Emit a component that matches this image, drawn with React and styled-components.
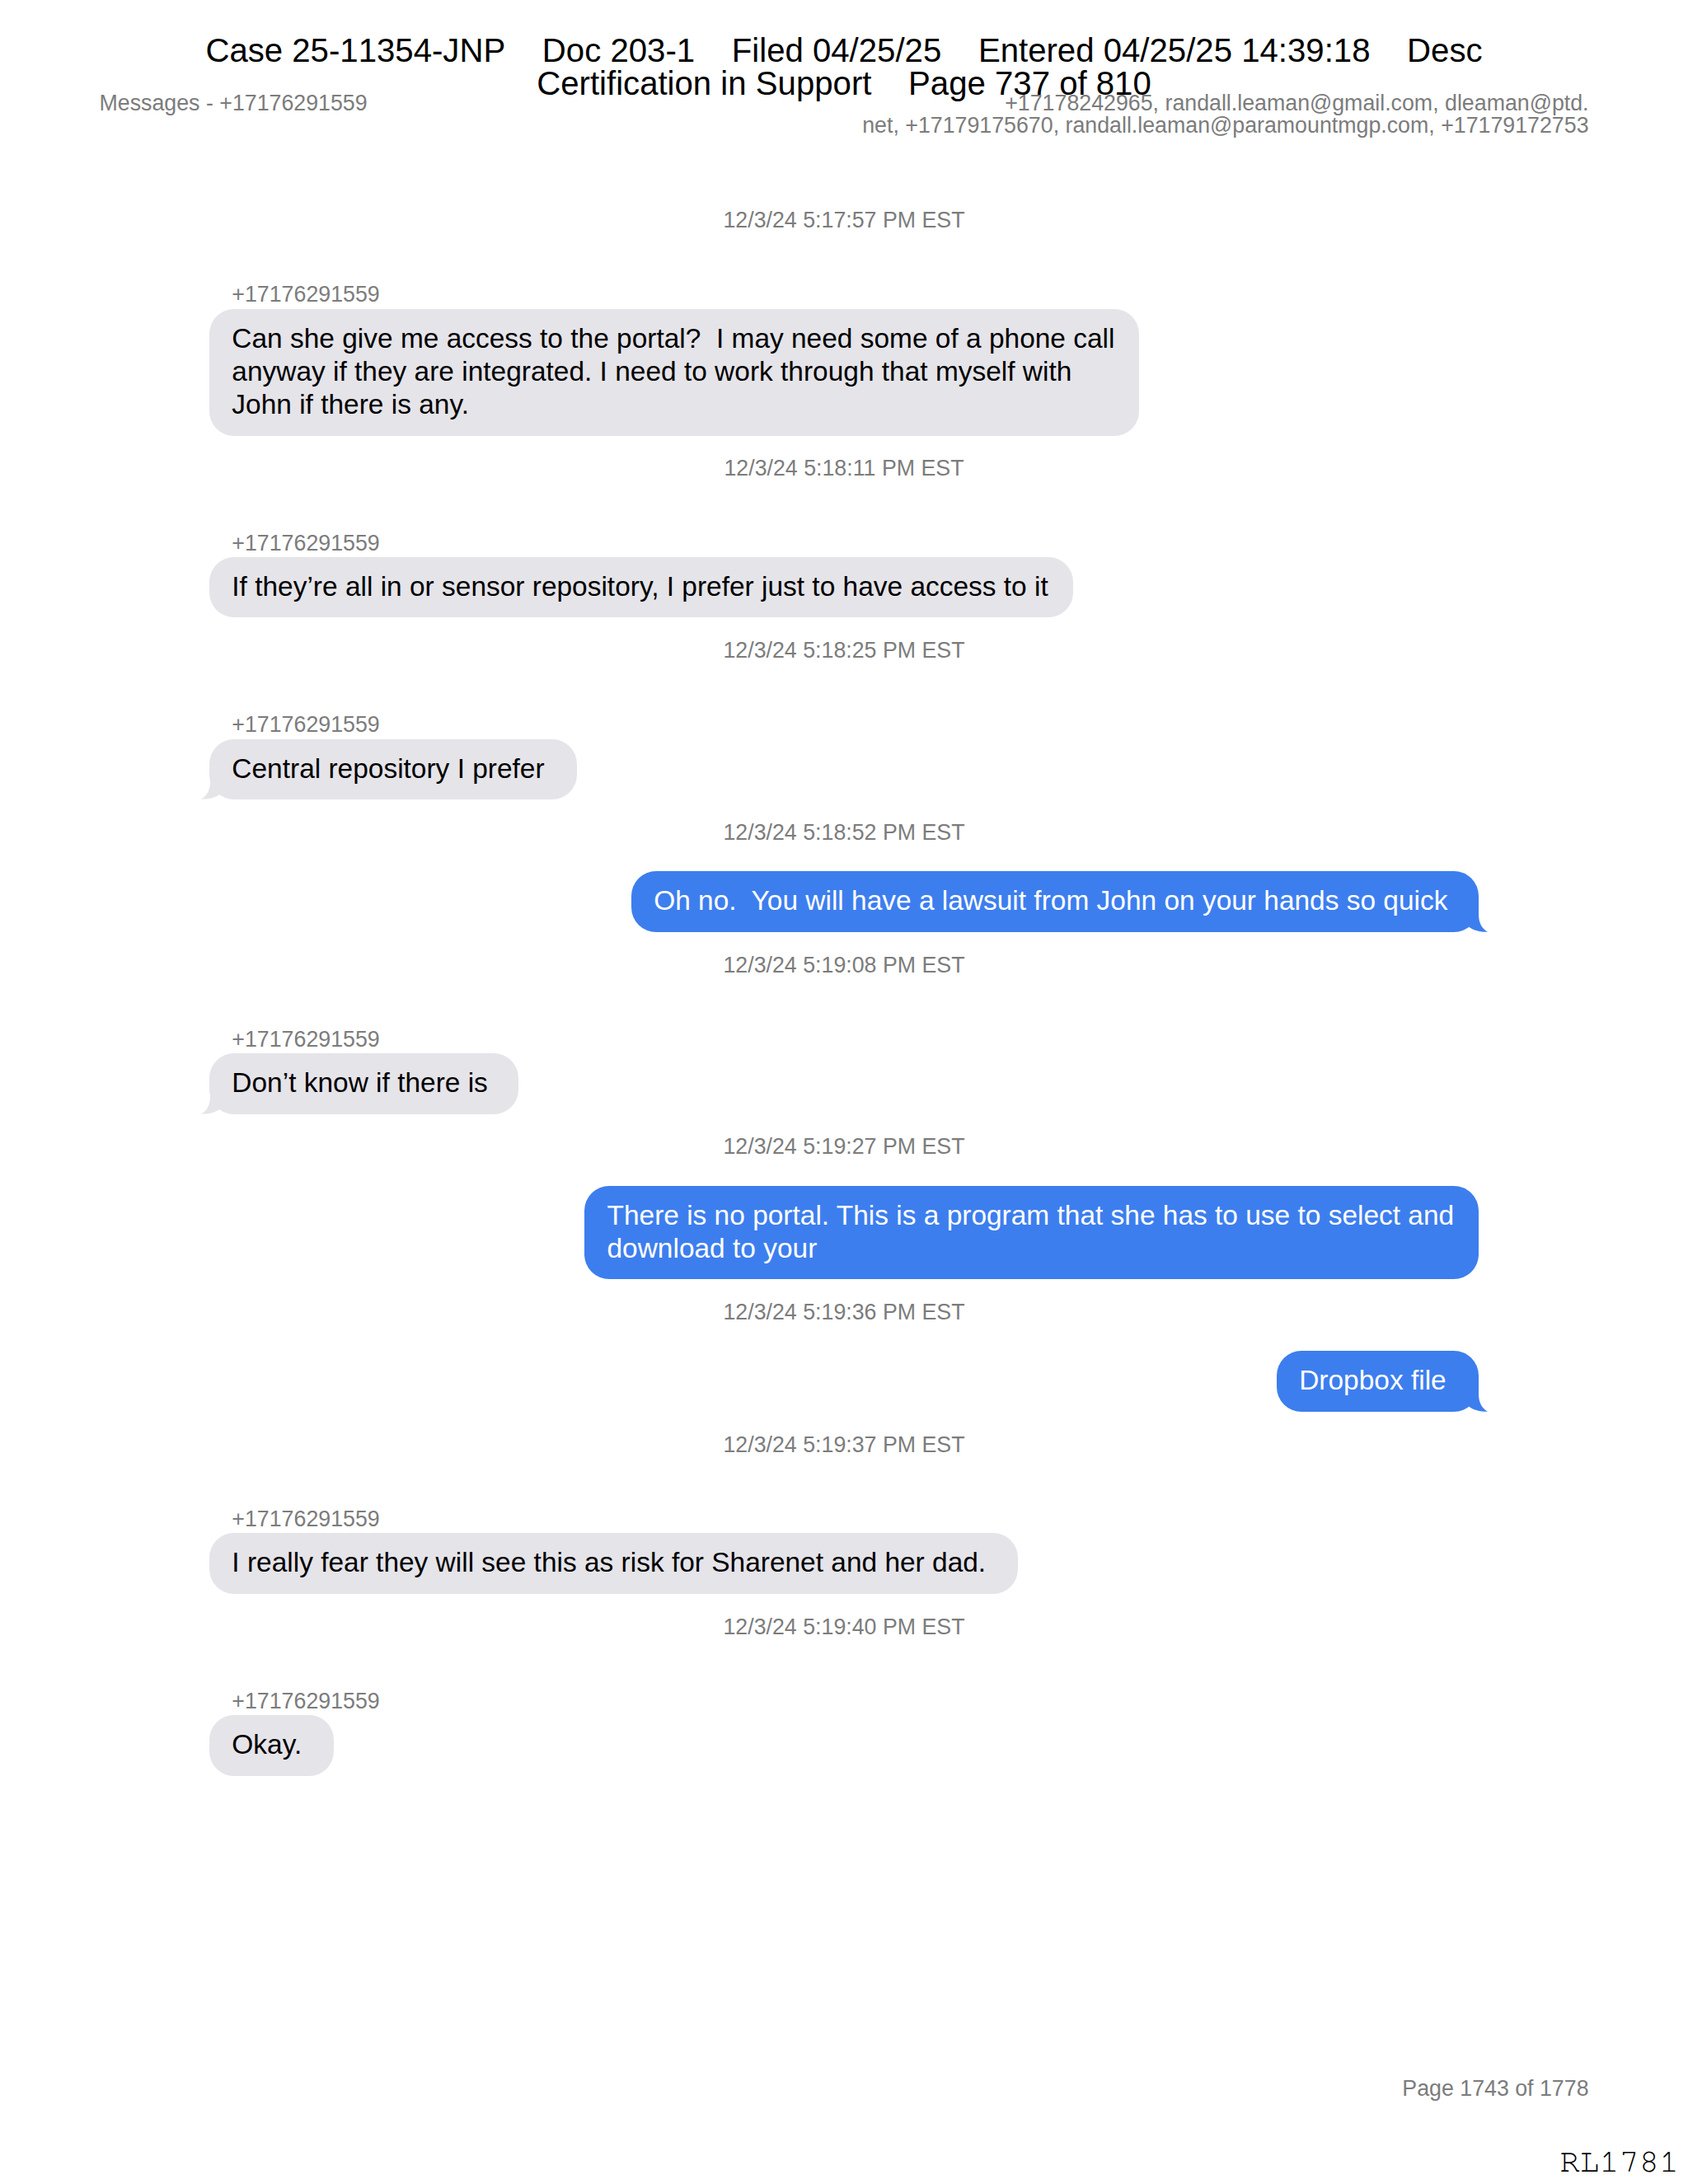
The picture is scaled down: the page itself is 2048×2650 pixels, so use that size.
import styled, { createGlobalStyle, css } from "styled-components";

// US Letter page, 612pt wide, laid out on a 2048px sheet
const pt = (n) => `${((n * 2048) / 612).toFixed(2)}px`;

const GlobalStyle = createGlobalStyle`
  * {
    box-sizing: border-box;
  }
  body {
    margin: 0;
    background: #ffffff;
  }
`;

const Page = styled.div`
  position: relative;
  display: flex;
  flex-direction: column;
  width: 2048px;
  height: 2650px;
  overflow: hidden;
  background: #ffffff;
  color: #000000;
  font-family: "Liberation Sans", Arial, sans-serif;
`;

const CourtStamp = styled.div`
  position: absolute;
  top: 42px;
  left: 0;
  width: 100%;
  text-align: center;
  white-space: pre;
  font-size: ${pt(12)};
  font-kerning: none;
  line-height: 40px;
`;

const PageHeader = styled.header`
  display: flex;
  justify-content: space-between;
  height: 251.2px;
  padding: 112px ${pt(36)} 0;
  color: #7c7c7c;
  font-size: ${pt(8)};
  line-height: ${pt(8)};
`;

const Participants = styled.div`
  text-align: right;
  white-space: pre-line;
`;

const Thread = styled.main`
  flex: 1;
  display: flex;
  flex-direction: column;
  padding: 0 ${pt(76)};
`;

const Entry = styled.section`
  display: flex;
  flex-direction: column;
  align-items: ${(props) => (props.$sent ? "flex-end" : "flex-start")};
  margin-bottom: ${pt(7.1)};
`;

const Timestamp = styled.time`
  align-self: center;
  color: #7c7c7c;
  font-size: ${pt(8)};
  line-height: ${pt(10)};
`;

const Sender = styled.div`
  margin: ${pt(16.97)} 0 ${pt(-0.07)} 27px;
  color: #7c7c7c;
  font-size: ${pt(8)};
  line-height: ${pt(10)};
`;

const Bubble = styled.div`
  position: relative;
  width: ${(props) => props.$width}px;
  padding: ${pt(4.75)} 0 ${pt(5.25)} 27px;
  border-radius: ${pt(9)};
  background: #e5e4e9;
  font-size: ${pt(10)};
  line-height: ${pt(12)};
  white-space: pre;
  ${(props) =>
    props.$sent &&
    css`
      margin-top: ${pt(8.9)};
      background: #3d7eee;
      color: #ffffff;
    `}
`;

const Tail = styled.svg`
  position: absolute;
  bottom: 0;
  width: 36px;
  height: 32px;
  ${(props) =>
    props.$sent
      ? css`
          right: -11px;
          color: #3d7eee;
        `
      : css`
          left: -10.5px;
          color: #e5e4e9;
          transform: scaleX(-1);
        `}
`;

const PageFooter = styled.footer`
  padding: 0 ${pt(36)};
  text-align: right;
  color: #7c7c7c;
  font-size: ${pt(8)};
  line-height: ${pt(10)};
`;

const BatesNumber = styled.div`
  height: 99px;
  padding: 52px 11px 0 0;
  text-align: right;
  font-family: "Nimbus Mono PS", "FreeMono", "Liberation Mono", monospace;
  font-size: ${pt(12)};
  line-height: 40px;
`;

const PHONE = "+17176291559";

const messages = [
  {
    time: "12/3/24 5:17:57 PM EST",
    width: 1128,
    text: "Can she give me access to the portal?  I may need some of a phone call\nanyway if they are integrated. I need to work through that myself with\nJohn if there is any.",
  },
  {
    time: "12/3/24 5:18:11 PM EST",
    width: 1047.5,
    text: "If they’re all in or sensor repository, I prefer just to have access to it",
  },
  {
    time: "12/3/24 5:18:25 PM EST",
    width: 445.2,
    tail: true,
    text: "Central repository I prefer",
  },
  {
    time: "12/3/24 5:18:52 PM EST",
    width: 1027.5,
    sent: true,
    tail: true,
    text: "Oh no.  You will have a lawsuit from John on your hands so quick",
  },
  {
    time: "12/3/24 5:19:08 PM EST",
    width: 375,
    tail: true,
    text: "Don’t know if there is",
  },
  {
    time: "12/3/24 5:19:27 PM EST",
    width: 1084.2,
    sent: true,
    text: "There is no portal. This is a program that she has to use to select and\ndownload to your",
  },
  {
    time: "12/3/24 5:19:36 PM EST",
    width: 244.5,
    sent: true,
    tail: true,
    text: "Dropbox file",
  },
  {
    time: "12/3/24 5:19:37 PM EST",
    width: 981,
    text: "I really fear they will see this as risk for Sharenet and her dad.",
  },
  {
    time: "12/3/24 5:19:40 PM EST",
    width: 150.6,
    text: "Okay.",
  },
];

const BubbleTail = ({ sent }) => (
  <Tail $sent={sent} viewBox="0 0 36 32" aria-hidden="true">
    {/* joins the body edge and curls out to a point at the baseline */}
    <path
      d="M10 0 H25 V10 C25 20 28 27 36 31.8 C27 32 19 30 13.5 26 Z"
      fill="currentColor"
    />
  </Tail>
);

const Message = ({ message }) => {
  const { time, width, sent, tail, text } = message;
  return (
    <Entry $sent={sent}>
      <Timestamp>{time}</Timestamp>
      {!sent && <Sender>{PHONE}</Sender>}
      <Bubble $sent={sent} $width={width}>
        {tail && <BubbleTail sent={sent} />}
        {text}
      </Bubble>
    </Entry>
  );
};

const App = () => {
  return (
    <>
      <GlobalStyle />
      <Page>
        <PageHeader>
          <div>Messages - {PHONE}</div>
          <Participants>
            {
              "+17178242965, randall.leaman@gmail.com, dleaman@ptd.\nnet, +17179175670, randall.leaman@paramountmgp.com, +17179172753"
            }
          </Participants>
        </PageHeader>
        <Thread>
          {messages.map((message) => (
            <Message key={message.time} message={message} />
          ))}
        </Thread>
        <PageFooter>Page 1743 of 1778</PageFooter>
        <BatesNumber>RL1781</BatesNumber>
        <CourtStamp>
          {
            "Case 25-11354-JNP    Doc 203-1    Filed 04/25/25    Entered 04/25/25 14:39:18    Desc\nCertification in Support    Page 737 of 810"
          }
        </CourtStamp>
      </Page>
    </>
  );
};

export default App;
